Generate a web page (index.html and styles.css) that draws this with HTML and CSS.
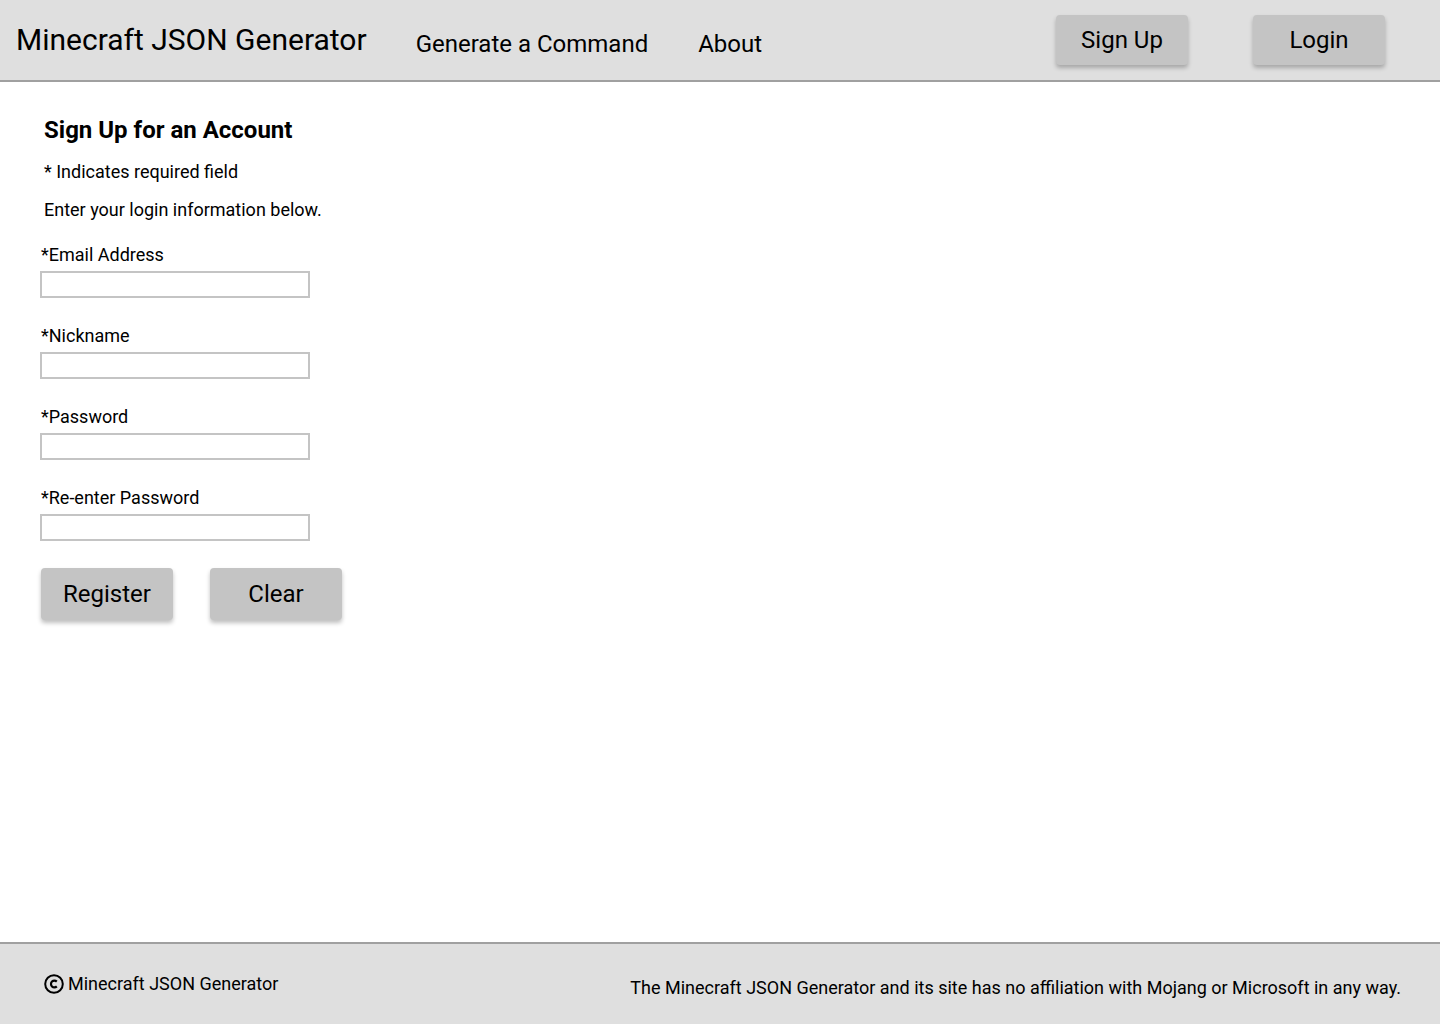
FILE: index.html
```html
<!DOCTYPE html>
<html lang="en">
<head>
<meta charset="utf-8">
<title>Sign Up - Minecraft JSON Generator</title>
<link rel="stylesheet" href="styles.css">
</head>
<body>
<div class="page">
  <header class="header">
    <div class="brand">Minecraft JSON Generator</div>
    <nav class="nav">
      <a class="nav-link nav-gen">Generate a Command</a>
      <a class="nav-link nav-about">About</a>
    </nav>
    <div class="auth">
      <button class="btn btn-head">Sign Up</button>
      <button class="btn btn-head">Login</button>
    </div>
  </header>
  <main class="main">
    <h1 class="title">Sign Up for an Account</h1>
    <p class="note">* Indicates required field</p>
    <p class="note note2">Enter your login information below.</p>
    <form class="form">
      <div class="field">
        <label class="label">*Email Address</label>
        <input class="input" type="text">
      </div>
      <div class="field">
        <label class="label">*Nickname</label>
        <input class="input" type="text">
      </div>
      <div class="field">
        <label class="label">*Password</label>
        <input class="input" type="password">
      </div>
      <div class="field">
        <label class="label">*Re-enter Password</label>
        <input class="input" type="password">
      </div>
      <div class="actions">
        <button class="btn btn-form" type="button">Register</button>
        <button class="btn btn-form" type="button">Clear</button>
      </div>
    </form>
  </main>
  <footer class="footer">
    <div class="copy">
      <svg class="copy-icon" width="20" height="20" viewBox="0 0 20 20" aria-hidden="true">
        <circle cx="10" cy="10" r="8.8" fill="none" stroke="#000" stroke-width="2"/>
        <path d="M12.8 7.6 A3.4 3.4 0 1 0 12.8 12.4" fill="none" stroke="#000" stroke-width="2.2"/>
      </svg>
      <span>Minecraft JSON Generator</span>
    </div>
    <div class="disclaimer">The Minecraft JSON Generator and its site has no affiliation with Mojang or Microsoft in any way.</div>
  </footer>
</div>
</body>
</html>
```
FILE: styles.css
```css
* { box-sizing: border-box; }
html, body { margin: 0; padding: 0; }
body {
  font-family: Roboto, "Liberation Sans", sans-serif;
  color: #000;
  background: #fff;
}
.page {
  height: 1024px;
  display: flex;
  flex-direction: column;
}
.header {
  height: 82px;
  background: #dfdfdf;
  border-bottom: 2px solid #a0a0a0;
  display: flex;
  align-items: flex-start;
  flex-shrink: 0;
}
.brand {
  margin-left: 16px;
  margin-top: 22px;
  font-size: 30px;
  line-height: 36px;
}
.nav {
  display: flex;
  margin-left: 49px;
  margin-top: 27px;
}
.nav-link {
  font-size: 24px;
  line-height: 34px;
  color: #000;
  text-decoration: none;
}
.nav-about { margin-left: 50px; }
.auth {
  margin-left: auto;
  margin-right: 55px;
  margin-top: 15px;
  display: flex;
  gap: 65px;
}
.btn {
  font-family: Roboto, "Liberation Sans", sans-serif;
  background: #c4c4c4;
  border: none;
  border-radius: 4px;
  box-shadow: 0 3px 4px rgba(0,0,0,0.25);
  color: #000;
  padding: 0;
  cursor: pointer;
}
.btn-head {
  width: 132px;
  height: 50px;
  font-size: 24px;
}
.main {
  flex: 1;
  padding: 29px 0 0 40px;
}
.title {
  margin: 0 0 0 4px;
  font-size: 24px;
  font-weight: 700;
  line-height: 38px;
}
.note {
  margin: 13px 0 0 4px;
  font-size: 18px;
  line-height: 20px;
}
.note2 { margin-top: 18px; }
.form {
  margin-top: 25px;
}
.field {
  display: flex;
  flex-direction: column;
  align-items: flex-start;
  margin-bottom: 28px;
}
.label {
  font-size: 18px;
  line-height: 20px;
  margin-left: 1px;
  margin-bottom: 6px;
}
.input {
  width: 270px;
  height: 27px;
  border: 2px solid #c4c4c4;
  background: #fff;
  margin: 0;
  padding: 0 4px;
}
.actions {
  display: flex;
  gap: 37px;
  margin-left: 1px;
  margin-top: -1px;
}
.btn-form {
  width: 132px;
  height: 52px;
  font-size: 24px;
}
.footer {
  height: 82px;
  flex-shrink: 0;
  background: #dfdfdf;
  border-top: 2px solid #a0a0a0;
  display: flex;
  align-items: flex-start;
  justify-content: space-between;
  padding: 0 39px 0 44px;
}
.copy {
  display: flex;
  align-items: center;
  gap: 4px;
  margin-top: 29px;
  font-size: 18px;
  line-height: 22px;
}
.copy-icon { display: block; }
.disclaimer {
  margin-top: 33px;
  font-size: 18px;
  line-height: 22px;
}
```
